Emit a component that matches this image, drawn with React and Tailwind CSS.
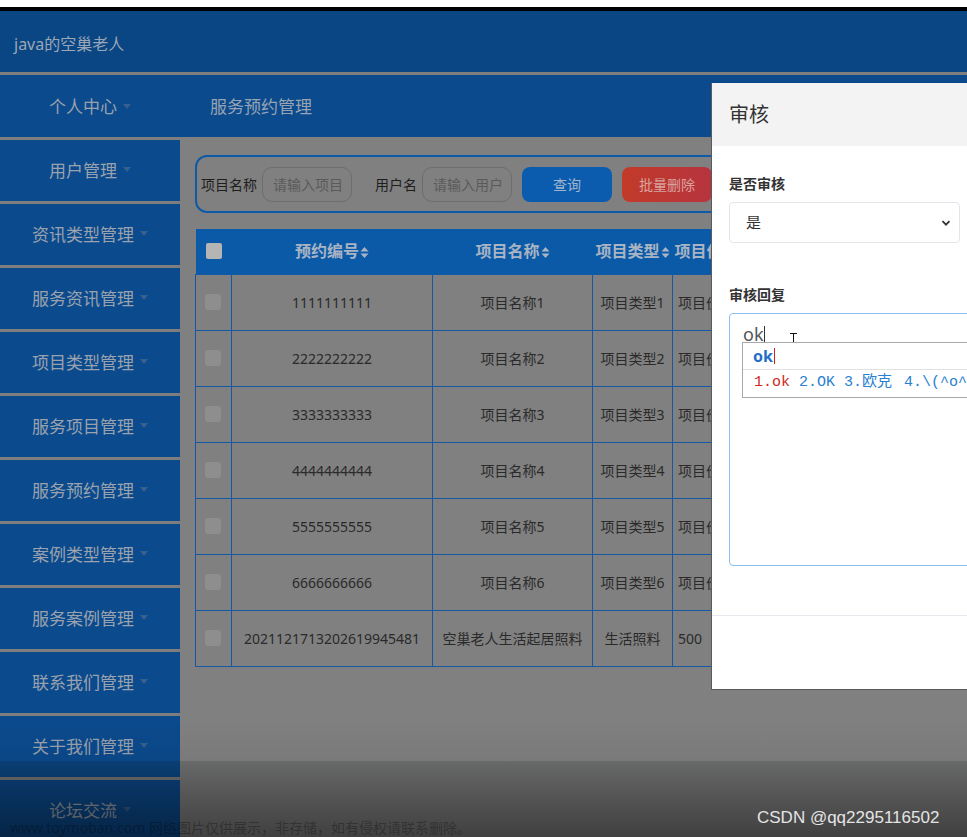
import React from 'react';

const menu = ['用户管理', '资讯类型管理', '服务资讯管理', '项目类型管理', '服务项目管理', '服务预约管理', '案例类型管理', '服务案例管理', '联系我们管理', '关于我们管理', '论坛交流'];

const rows = [
    ['1111111111', '项目名称1', '项目类型1', '项目价格1'],
    ['2222222222', '项目名称2', '项目类型2', '项目价格2'],
    ['3333333333', '项目名称3', '项目类型3', '项目价格3'],
    ['4444444444', '项目名称4', '项目类型4', '项目价格4'],
    ['5555555555', '项目名称5', '项目类型5', '项目价格5'],
    ['6666666666', '项目名称6', '项目类型6', '项目价格6'],
    ['2021121713202619945481', '空巢老人生活起居照料', '生活照料', '500'],
];

const Caret = () => (
    <span className="ml-[6px] -translate-y-[1px] w-0 h-0 border-l-[4px] border-r-[4px] border-t-[5px] border-l-transparent border-r-transparent border-t-[#35608f]"></span>
);

const SortIcon = () => (
    <svg width="9" height="13" viewBox="0 0 9 13" className="ml-[1px] inline-block">
        <path d="M4.5 1 L8.5 5.5 L0.5 5.5 Z" fill="#a8b3c3" />
        <path d="M4.5 12 L8.5 7.5 L0.5 7.5 Z" fill="#a8b3c3" />
    </svg>
);

const MenuItem = ({ label }) => (
    <div className="h-[61px] shrink-0 bg-[#0b4a8d] flex items-center justify-center text-[17px] text-[#9aa2ad]">
        <span>{label}</span>
        <Caret />
    </div>
);

export default function App() {
    return (
        <div className="relative w-[967px] h-[837px] overflow-hidden bg-[#808080] font-['Noto_Sans','Noto_Sans_CJK_SC',sans-serif]">
            {/* top bar */}
            <div className="h-[7px] bg-white"></div>
            <div className="h-[4px] bg-black"></div>
            <div className="h-[61px] bg-[#0a4683] flex items-center px-[14px] pt-[4px] text-[16px] text-[#9aa6b6]">java的空巢老人</div>
            <div className="h-[3px] bg-[#7e7e7e]"></div>

            {/* second band */}
            <div className="h-[62px] flex bg-[#0b4a8d]">
                <div className="w-[180px] flex items-center justify-center pt-[2px] text-[17px] text-[#9aa2ad]">
                    <span>个人中心</span>
                    <Caret />
                </div>
                <div className="flex items-center pl-[30px] pt-[2px] text-[17px] text-[#97a3b3]">服务预约管理</div>
            </div>

            <div className="flex">
                {/* sidebar */}
                <div className="w-[180px] shrink-0 flex flex-col gap-[3px] pt-[3px] bg-[#7e7e7e]">
                    {menu.map(m => <MenuItem key={m} label={m} />)}
                </div>

                {/* content */}
                <div className="flex-1 pl-[15px] pt-[18px] min-w-0">
                    <div className="h-[58px] w-[760px] border-2 border-[#0f5aa8] rounded-[12px] flex items-center pl-[4px] text-[14px] text-[#1e1e1e]">
                        <span>项目名称</span>
                        <div className="ml-[5px] w-[90px] h-[35px] rounded-[10px] border border-[#6d6d6d] flex items-center pl-[10px] text-[#5a5a5a] whitespace-nowrap overflow-hidden">请输入项目</div>
                        <span className="ml-[23px]">用户名</span>
                        <div className="ml-[5px] w-[90px] h-[35px] rounded-[10px] border border-[#6d6d6d] flex items-center pl-[10px] text-[#5a5a5a] whitespace-nowrap overflow-hidden">请输入用户</div>
                        <div className="ml-[10px] w-[90px] h-[35px] rounded-[8px] bg-[#0b5cae] flex items-center justify-center text-[#a0b4cb]">查询</div>
                        <div className="ml-[10px] w-[90px] h-[35px] rounded-[8px] bg-gradient-to-r from-[#c23a28] to-[#b6343e] flex items-center justify-center text-[#d9a3a0]">批量删除</div>
                    </div>

                    <table className="mt-[16px] border-collapse table-fixed w-[760px] text-[14px] text-[#2a2a2a]">
                        <colgroup>
                            <col className="w-[36px]" />
                            <col className="w-[201px]" />
                            <col className="w-[160px]" />
                            <col className="w-[80px]" />
                            <col className="w-[100px]" />
                            <col />
                        </colgroup>
                        <thead>
                            <tr className="bg-[#0b5aa8] h-[45px] text-[16px] font-bold text-[#a8b3c3]">
                                <th className="p-0"><div className="ml-[10px] w-[16px] h-[16px] rounded-[2px] bg-[#b5b5b5]"></div></th>
                                <th className="p-0 font-bold">预约编号<SortIcon /></th>
                                <th className="p-0 font-bold">项目名称<SortIcon /></th>
                                <th className="p-0 font-bold whitespace-nowrap">项目类型<SortIcon /></th>
                                <th className="p-0 pl-[2px] text-left font-bold whitespace-nowrap">项目价格<SortIcon /></th>
                                <th className="p-0 font-bold">操作</th>
                            </tr>
                        </thead>
                        <tbody>
                            {rows.map(r => (
                                <tr key={r[0]} className="h-[56px]">
                                    <td className="border border-[#1559a6] p-0"><div className="ml-[9px] w-[16px] h-[16px] rounded-[3px] bg-[#8e8e8e]"></div></td>
                                    <td className="border border-[#1559a6] p-0 text-center">{r[0]}</td>
                                    <td className="border border-[#1559a6] p-0 text-center whitespace-nowrap">{r[1]}</td>
                                    <td className="border border-[#1559a6] p-0 text-center whitespace-nowrap">{r[2]}</td>
                                    <td className="border border-[#1559a6] p-0 pl-[5px] whitespace-nowrap">{r[3]}</td>
                                    <td className="border border-[#1559a6] p-0"></td>
                                </tr>
                            ))}
                        </tbody>
                    </table>
                </div>
            </div>

            {/* bottom player shading */}
            <div className="absolute left-0 right-0 top-[720px] h-[41px] bg-gradient-to-b from-transparent to-black/5"></div>
            <div className="absolute left-0 right-0 top-[761px] bottom-0 bg-gradient-to-b from-[#0a1410]/20 to-black/50"></div>

            {/* modal */}
            <div className="absolute left-[711px] top-[83px] w-[420px] h-[607px] bg-white border-l border-b border-[#5a5a5a] flex flex-col">
                <div className="h-[63px] shrink-0 bg-[#f3f3f3] flex items-center pl-[17px] text-[20px] text-[#333]">审核</div>
                <div className="flex-1 pl-[17px]">
                    <div className="mt-[28px] text-[14px] font-bold text-[#333] leading-[20px]">是否审核</div>
                    <div className="mt-[8px] w-[231px] h-[41px] rounded-[4px] border border-[#e1e6ea] flex items-center justify-between pl-[16px] pr-[8px] text-[15px] text-[#333]">
                        <span>是</span>
                        <svg width="10" height="10" viewBox="0 0 10 10">
                            <path d="M1.5 3.2 L5 6.7 L8.5 3.2" fill="none" stroke="#333" strokeWidth="1.8" />
                        </svg>
                    </div>
                    <div className="mt-[42px] text-[14px] font-bold text-[#333] leading-[20px]">审核回复</div>
                    <div className="relative mt-[8px] w-[300px] h-[253px] rounded-[4px] border border-[#8cc0ee]">
                        <div className="absolute left-[13px] top-[8px] text-[18px] text-[#555] leading-[24px] flex items-center">
                            ok<span className="w-[1px] h-[17px] bg-[#333]"></span>
                        </div>
                        <div className="absolute left-[59px] top-[19px] w-[8px] h-[18px] flex flex-col items-center justify-between">
                            <div className="w-[7px] h-[1px] bg-[#111]"></div>
                            <div className="flex-1 w-[1px] bg-[#111]"></div>
                            <div className="w-[7px] h-[1px] bg-[#111]"></div>
                        </div>
                        <div className="absolute left-[12px] top-[28px] w-[280px] bg-white border border-[#a8a8a8]">
                            <div className="h-[27px] flex items-center pl-[10px] border-b border-[#e0e0e0]">
                                <span className="text-[16px] font-bold text-[#1e6fc6]">ok</span>
                                <span className="ml-[1px] w-[1px] h-[16px] bg-[#d02020]"></span>
                            </div>
                            <div className="h-[27px] flex items-center pl-[11px] text-[15px] font-['Liberation_Mono','Noto_Sans_CJK_SC',monospace] whitespace-nowrap">
                                <span className="text-[#d02a1c]">1.ok</span>
                                <span className="ml-[9px] text-[#2a7fd0]">2.OK</span>
                                <span className="ml-[9px] text-[#2a7fd0]">3.欧克</span>
                                <span className="ml-[12px] text-[#2a7fd0]">4.\(^o^)</span>
                            </div>
                        </div>
                    </div>
                </div>
                <div className="h-[74px] shrink-0 border-t border-[#e6eaee]"></div>
            </div>

            {/* watermarks */}
            <div className="absolute left-[10px] top-[819px] text-[14px] leading-[18px] text-black/30 whitespace-nowrap">www.toymoban.com 网络图片仅供展示，非存储，如有侵权请联系删除。</div>
            <div className="absolute left-[757px] top-[807px] text-[17px] leading-[22px] text-[#e4e4e4] font-['Liberation_Sans',sans-serif]">CSDN @qq2295116502</div>
        </div>
    );
}
